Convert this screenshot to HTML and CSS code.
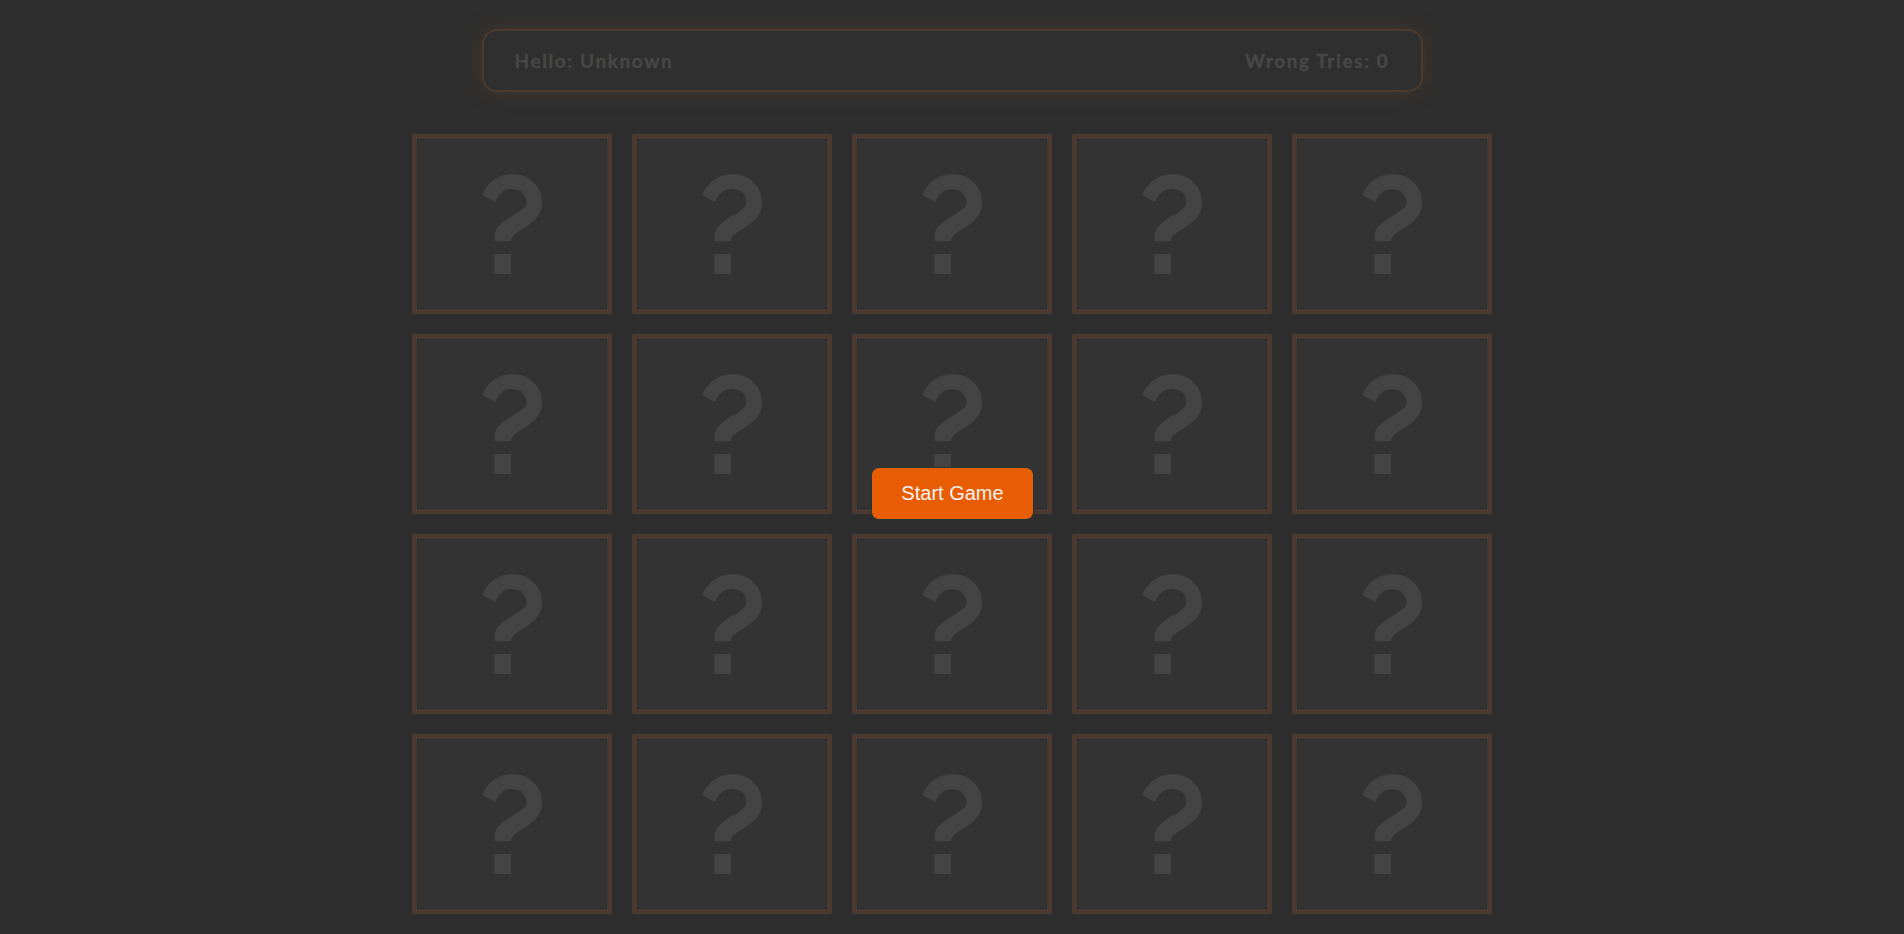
FILE: index.html
```html
<!DOCTYPE html>
<html lang="en">
<head>
<meta charset="utf-8">
<title>Memory Game</title>
<link rel="stylesheet" href="styles.css">
</head>
<body>
<div class="app">
  <header class="info">
    <span class="name">Hello: Unknown</span>
    <span class="tries">Wrong Tries: 0</span>
  </header>
  <main class="board">
    <div class="card"><svg class="q" viewBox="245 143 180 300"><path d="M245 205C262 168 295 143 337 143C385 143 425 178 425 228C425 268 400 288 372 305C345 320 332 330 332 345L282 345L282 335C282 305 300 290 330 272C360 255 378 245 378 228C378 203 360 188 336 188C312 188 295 200 285 228Z"/><rect x="282" y="383" width="50" height="60"/></svg></div>
    <div class="card"><svg class="q" viewBox="245 143 180 300"><path d="M245 205C262 168 295 143 337 143C385 143 425 178 425 228C425 268 400 288 372 305C345 320 332 330 332 345L282 345L282 335C282 305 300 290 330 272C360 255 378 245 378 228C378 203 360 188 336 188C312 188 295 200 285 228Z"/><rect x="282" y="383" width="50" height="60"/></svg></div>
    <div class="card"><svg class="q" viewBox="245 143 180 300"><path d="M245 205C262 168 295 143 337 143C385 143 425 178 425 228C425 268 400 288 372 305C345 320 332 330 332 345L282 345L282 335C282 305 300 290 330 272C360 255 378 245 378 228C378 203 360 188 336 188C312 188 295 200 285 228Z"/><rect x="282" y="383" width="50" height="60"/></svg></div>
    <div class="card"><svg class="q" viewBox="245 143 180 300"><path d="M245 205C262 168 295 143 337 143C385 143 425 178 425 228C425 268 400 288 372 305C345 320 332 330 332 345L282 345L282 335C282 305 300 290 330 272C360 255 378 245 378 228C378 203 360 188 336 188C312 188 295 200 285 228Z"/><rect x="282" y="383" width="50" height="60"/></svg></div>
    <div class="card"><svg class="q" viewBox="245 143 180 300"><path d="M245 205C262 168 295 143 337 143C385 143 425 178 425 228C425 268 400 288 372 305C345 320 332 330 332 345L282 345L282 335C282 305 300 290 330 272C360 255 378 245 378 228C378 203 360 188 336 188C312 188 295 200 285 228Z"/><rect x="282" y="383" width="50" height="60"/></svg></div>
    <div class="card"><svg class="q" viewBox="245 143 180 300"><path d="M245 205C262 168 295 143 337 143C385 143 425 178 425 228C425 268 400 288 372 305C345 320 332 330 332 345L282 345L282 335C282 305 300 290 330 272C360 255 378 245 378 228C378 203 360 188 336 188C312 188 295 200 285 228Z"/><rect x="282" y="383" width="50" height="60"/></svg></div>
    <div class="card"><svg class="q" viewBox="245 143 180 300"><path d="M245 205C262 168 295 143 337 143C385 143 425 178 425 228C425 268 400 288 372 305C345 320 332 330 332 345L282 345L282 335C282 305 300 290 330 272C360 255 378 245 378 228C378 203 360 188 336 188C312 188 295 200 285 228Z"/><rect x="282" y="383" width="50" height="60"/></svg></div>
    <div class="card"><svg class="q" viewBox="245 143 180 300"><path d="M245 205C262 168 295 143 337 143C385 143 425 178 425 228C425 268 400 288 372 305C345 320 332 330 332 345L282 345L282 335C282 305 300 290 330 272C360 255 378 245 378 228C378 203 360 188 336 188C312 188 295 200 285 228Z"/><rect x="282" y="383" width="50" height="60"/></svg></div>
    <div class="card"><svg class="q" viewBox="245 143 180 300"><path d="M245 205C262 168 295 143 337 143C385 143 425 178 425 228C425 268 400 288 372 305C345 320 332 330 332 345L282 345L282 335C282 305 300 290 330 272C360 255 378 245 378 228C378 203 360 188 336 188C312 188 295 200 285 228Z"/><rect x="282" y="383" width="50" height="60"/></svg></div>
    <div class="card"><svg class="q" viewBox="245 143 180 300"><path d="M245 205C262 168 295 143 337 143C385 143 425 178 425 228C425 268 400 288 372 305C345 320 332 330 332 345L282 345L282 335C282 305 300 290 330 272C360 255 378 245 378 228C378 203 360 188 336 188C312 188 295 200 285 228Z"/><rect x="282" y="383" width="50" height="60"/></svg></div>
    <div class="card"><svg class="q" viewBox="245 143 180 300"><path d="M245 205C262 168 295 143 337 143C385 143 425 178 425 228C425 268 400 288 372 305C345 320 332 330 332 345L282 345L282 335C282 305 300 290 330 272C360 255 378 245 378 228C378 203 360 188 336 188C312 188 295 200 285 228Z"/><rect x="282" y="383" width="50" height="60"/></svg></div>
    <div class="card"><svg class="q" viewBox="245 143 180 300"><path d="M245 205C262 168 295 143 337 143C385 143 425 178 425 228C425 268 400 288 372 305C345 320 332 330 332 345L282 345L282 335C282 305 300 290 330 272C360 255 378 245 378 228C378 203 360 188 336 188C312 188 295 200 285 228Z"/><rect x="282" y="383" width="50" height="60"/></svg></div>
    <div class="card"><svg class="q" viewBox="245 143 180 300"><path d="M245 205C262 168 295 143 337 143C385 143 425 178 425 228C425 268 400 288 372 305C345 320 332 330 332 345L282 345L282 335C282 305 300 290 330 272C360 255 378 245 378 228C378 203 360 188 336 188C312 188 295 200 285 228Z"/><rect x="282" y="383" width="50" height="60"/></svg></div>
    <div class="card"><svg class="q" viewBox="245 143 180 300"><path d="M245 205C262 168 295 143 337 143C385 143 425 178 425 228C425 268 400 288 372 305C345 320 332 330 332 345L282 345L282 335C282 305 300 290 330 272C360 255 378 245 378 228C378 203 360 188 336 188C312 188 295 200 285 228Z"/><rect x="282" y="383" width="50" height="60"/></svg></div>
    <div class="card"><svg class="q" viewBox="245 143 180 300"><path d="M245 205C262 168 295 143 337 143C385 143 425 178 425 228C425 268 400 288 372 305C345 320 332 330 332 345L282 345L282 335C282 305 300 290 330 272C360 255 378 245 378 228C378 203 360 188 336 188C312 188 295 200 285 228Z"/><rect x="282" y="383" width="50" height="60"/></svg></div>
    <div class="card"><svg class="q" viewBox="245 143 180 300"><path d="M245 205C262 168 295 143 337 143C385 143 425 178 425 228C425 268 400 288 372 305C345 320 332 330 332 345L282 345L282 335C282 305 300 290 330 272C360 255 378 245 378 228C378 203 360 188 336 188C312 188 295 200 285 228Z"/><rect x="282" y="383" width="50" height="60"/></svg></div>
    <div class="card"><svg class="q" viewBox="245 143 180 300"><path d="M245 205C262 168 295 143 337 143C385 143 425 178 425 228C425 268 400 288 372 305C345 320 332 330 332 345L282 345L282 335C282 305 300 290 330 272C360 255 378 245 378 228C378 203 360 188 336 188C312 188 295 200 285 228Z"/><rect x="282" y="383" width="50" height="60"/></svg></div>
    <div class="card"><svg class="q" viewBox="245 143 180 300"><path d="M245 205C262 168 295 143 337 143C385 143 425 178 425 228C425 268 400 288 372 305C345 320 332 330 332 345L282 345L282 335C282 305 300 290 330 272C360 255 378 245 378 228C378 203 360 188 336 188C312 188 295 200 285 228Z"/><rect x="282" y="383" width="50" height="60"/></svg></div>
    <div class="card"><svg class="q" viewBox="245 143 180 300"><path d="M245 205C262 168 295 143 337 143C385 143 425 178 425 228C425 268 400 288 372 305C345 320 332 330 332 345L282 345L282 335C282 305 300 290 330 272C360 255 378 245 378 228C378 203 360 188 336 188C312 188 295 200 285 228Z"/><rect x="282" y="383" width="50" height="60"/></svg></div>
    <div class="card"><svg class="q" viewBox="245 143 180 300"><path d="M245 205C262 168 295 143 337 143C385 143 425 178 425 228C425 268 400 288 372 305C345 320 332 330 332 345L282 345L282 335C282 305 300 290 330 272C360 255 378 245 378 228C378 203 360 188 336 188C312 188 295 200 285 228Z"/><rect x="282" y="383" width="50" height="60"/></svg></div>
  </main>
</div>
<div class="overlay">
  <button class="start">Start Game</button>
</div>
</body>
</html>
```

FILE: styles.css
```css
html, body {
  margin: 0;
  padding: 0;
  background: #2e2e2e;
}

body {
  position: relative;
  overflow: hidden;
  height: 934px;
}

.app {
  padding-top: 29px;
}

.info {
  box-sizing: border-box;
  width: 941px;
  height: 63px;
  margin: 0 auto;
  padding: 0 31px;
  display: flex;
  align-items: center;
  justify-content: space-between;
  border: 2px solid #4b3a2e;
  border-radius: 15px;
  background: #2f2f2f;
  box-shadow: 0 0 18px rgba(90, 60, 38, 0.6);
  font-family: Lato, "Open Sans", sans-serif;
  font-weight: 700;
  font-size: 19px;
  letter-spacing: 1.6px;
  color: #474747;
  -webkit-text-stroke: 0.4px #474747;
}

.board {
  display: grid;
  grid-template-columns: repeat(5, 200px);
  grid-auto-rows: 180px;
  gap: 20px;
  justify-content: center;
  margin-top: 42px;
}

.card {
  box-sizing: border-box;
  border: 5px solid #4a3a2f;
  border-radius: 2px;
  background: #333333;
  box-shadow: inset 0 0 0 1px #2b2f33;
  display: flex;
  align-items: center;
  justify-content: center;
}

.q {
  width: 60px;
  height: 100px;
  fill: #444444;
}

.overlay {
  position: absolute;
  inset: 0;
}

.start {
  position: absolute;
  left: 871px;
  top: 467px;
  box-sizing: border-box;
  width: 163px;
  height: 53px;
  border: 1px solid #1e3740;
  border-radius: 8px;
  background: #e85d04;
  color: #f2f2f2;
  font-family: "Liberation Sans", Arial, sans-serif;
  font-size: 20px;
  padding: 0;
  cursor: pointer;
}
```
